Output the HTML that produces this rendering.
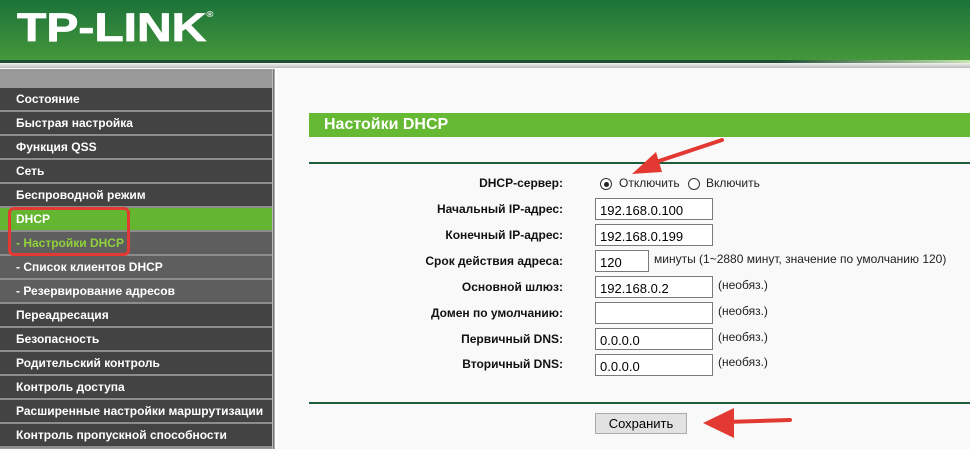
<!DOCTYPE html>
<html><head><meta charset="utf-8"><style>
*{margin:0;padding:0;box-sizing:border-box}
body{width:970px;height:443px;overflow:hidden;background:#f9f9f9;font-family:"Liberation Sans",Arial,sans-serif;position:relative}
.hdr{position:absolute;left:0;top:0;width:970px;height:60px;background:linear-gradient(#1c733a,#44973a)}
.logo{position:absolute;left:17px;top:6px;color:#fff;font-weight:bold;font-size:40px;letter-spacing:0px;transform:scaleX(1.2);transform-origin:left;-webkit-text-stroke:0.8px #fff}
.strip{position:absolute;left:0;top:60px;width:970px;height:3px;background:linear-gradient(90deg,#1d4d33 0,#1d4d33 80%,#c6e4b0 100%)}
.strip2{position:absolute;left:0;top:63px;width:970px;height:5px;background:linear-gradient(#f0f0f0,#bbb)}
.side{position:absolute;left:0;top:69px;width:272px;height:380px;background:#9a9a9a}
.side .top{height:19px;background:#999}
.item{height:24px;border-bottom:2px solid #8c8c8c;background:#434343;color:#fff;font-weight:bold;font-size:12px;padding-left:16px;line-height:22px}
.sub{background:#5e5e5e;font-weight:bold}
.act{background:#64b630}
.vb{position:absolute;left:272px;top:69px;width:5px;height:380px;background:linear-gradient(90deg,#ddd,#555 40%,#fff 60%)}
.bar{position:absolute;left:309px;top:113px;width:661px;height:24px;background:#66b932;color:#fff;font-weight:bold;font-size:16px;line-height:24px;padding-left:15px}
.hl{position:absolute;left:309px;width:661px;height:2px;background:#1c5e3a}
.lbl{position:absolute;right:407px;font-size:12px;font-weight:bold;color:#111}
.inp{position:absolute;left:595px;width:118px;height:22px;border:1px solid #7a7a7a;background:#fff;font-size:13px;padding:4px 0 0 4px;color:#000}
.note{position:absolute;font-size:12px;color:#222}
.btn{position:absolute;left:595px;top:413px;width:92px;height:21px;border:1px solid #aaa;background:#e2e2e2;font-size:13px;text-align:center;line-height:19px}
</style></head><body>
<div class="hdr"><div class="logo">TP-LINK<sup style="font-size:8px;vertical-align:24px;-webkit-text-stroke:0">®</sup></div></div>
<div class="strip"></div><div class="strip2"></div>
<div class="side"><div class="top"></div>
<div class="item">Состояние</div>
<div class="item">Быстрая настройка</div>
<div class="item">Функция QSS</div>
<div class="item">Сеть</div>
<div class="item">Беспроводной режим</div>
<div class="item act">DHCP</div>
<div class="item sub" style="color:#8fd13c">- Настройки DHCP</div>
<div class="item sub">- Список клиентов DHCP</div>
<div class="item sub">- Резервирование адресов</div>
<div class="item">Переадресация</div>
<div class="item">Безопасность</div>
<div class="item">Родительский контроль</div>
<div class="item">Контроль доступа</div>
<div class="item">Расширенные настройки маршрутизации</div>
<div class="item">Контроль пропускной способности</div>
</div>
<div class="vb"></div>
<div style="position:absolute;left:8px;top:207px;width:122px;height:49px;border:3px solid #e23a33;border-radius:6px"></div>
<div class="bar">Настойки DHCP</div>
<div class="hl" style="top:162px"></div>
<div class="hl" style="top:402px"></div>
<div class="lbl" style="top:176px">DHCP-сервер:</div>
<div class="lbl" style="top:202px">Начальный IP-адрес:</div>
<div class="lbl" style="top:228px">Конечный IP-адрес:</div>
<div class="lbl" style="top:254px">Срок действия адреса:</div>
<div class="lbl" style="top:280px">Основной шлюз:</div>
<div class="lbl" style="top:306px">Домен по умолчанию:</div>
<div class="lbl" style="top:332px">Первичный DNS:</div>
<div class="lbl" style="top:357px">Вторичный DNS:</div>
<div style="position:absolute;left:600px;top:178px;width:12px;height:12px;border:1px solid #333;border-radius:50%;background:#fff"><div style="position:absolute;left:2.5px;top:2.5px;width:5px;height:5px;border-radius:50%;background:#222"></div></div>
<div class="note" style="left:619px;top:176px;font-size:12px">Отключить</div>
<div style="position:absolute;left:688px;top:178px;width:12px;height:12px;border:1px solid #333;border-radius:50%;background:#fff"></div>
<div class="note" style="left:706px;top:176px">Включить</div>
<div class="inp" style="top:198px">192.168.0.100</div>
<div class="inp" style="top:224px">192.168.0.199</div>
<div class="inp" style="top:250px;width:54px">120</div>
<div class="note" style="left:654px;top:252px">минуты (1~2880 минут, значение по умолчанию 120)</div>
<div class="inp" style="top:276px">192.168.0.2</div>
<div class="inp" style="top:302px"></div>
<div class="inp" style="top:328px">0.0.0.0</div>
<div class="inp" style="top:354px">0.0.0.0</div>
<div class="note" style="left:718px;top:278px">(необяз.)</div>
<div class="note" style="left:718px;top:304px">(необяз.)</div>
<div class="note" style="left:718px;top:330px">(необяз.)</div>
<div class="note" style="left:718px;top:355px">(необяз.)</div>
<div class="btn">Сохранить</div>
<svg style="position:absolute;left:0;top:0" width="970" height="443">
<line x1="722" y1="140" x2="650" y2="164" stroke="#e23a33" stroke-width="4" stroke-linecap="round"/>
<polygon points="632,174 656,152 662,172" fill="#e23a33"/>
<line x1="790" y1="420" x2="725" y2="422" stroke="#e23a33" stroke-width="4" stroke-linecap="round"/>
<polygon points="703,423 734,408 734,438" fill="#e23a33"/>
</svg>
</body></html>
